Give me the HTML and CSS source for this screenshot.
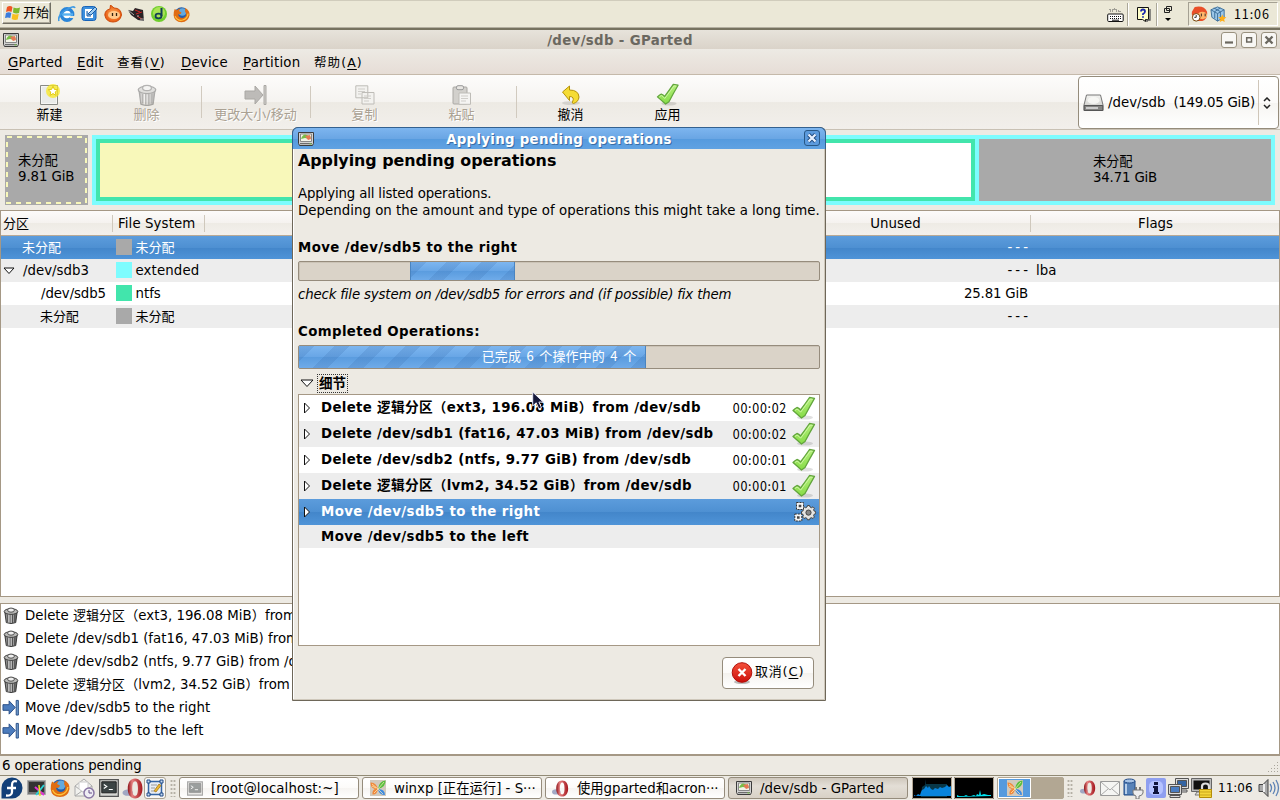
FILE: index.html
```html
<!DOCTYPE html>
<html lang="zh-CN">
<head>
<meta charset="utf-8">
<title>/dev/sdb - GParted</title>
<link rel="stylesheet" href="styles.css">
</head>
<body>
<svg class="defs" width="0" height="0">
  <defs>
    <linearGradient id="gGreen" x1="0" y1="0" x2="0" y2="1"><stop offset="0" stop-color="#b4ef7c"/><stop offset="1" stop-color="#86dc46"/></linearGradient>
    <linearGradient id="gRed" x1="0" y1="0" x2="0" y2="1"><stop offset="0" stop-color="#f4503a"/><stop offset="1" stop-color="#cc0f0a"/></linearGradient>
    <linearGradient id="gMetal" x1="0" y1="0" x2="1" y2="0"><stop offset="0" stop-color="#555"/><stop offset=".35" stop-color="#eee"/><stop offset="1" stop-color="#555"/></linearGradient>
    <linearGradient id="gDisk" x1="0" y1="0" x2="0" y2="1"><stop offset="0" stop-color="#f4f4f2"/><stop offset="1" stop-color="#c4c4c0"/></linearGradient>
    <radialGradient id="gOrange"><stop offset="0" stop-color="#ffb060"/><stop offset="1" stop-color="#e85a10"/></radialGradient>
    <linearGradient id="gOpera" x1="0" y1="0" x2="1" y2="0"><stop offset="0" stop-color="#8d1218"/><stop offset=".3" stop-color="#e58080"/><stop offset="1" stop-color="#a3151c"/></linearGradient>
    <symbol id="check" viewBox="0 0 24 24"><ellipse cx="13" cy="21.500" rx="8" ry="2" fill="#000" opacity=".12"/><path d="M1 14.500Q3 12.500 5 11.500q2 .5 3.500 2.500Q13 8 17.500 1.500l5 .8Q18 10 13 19.500L9.500 22Q5 18 1 14.500z" fill="url(#gGreen)" stroke="#62a53c" stroke-width="1.300" stroke-linejoin="round"/><path d="M3 14.500 5 13q2 1 3.600 3.200Q14 9 18.300 3l2.200.3" fill="none" stroke="#d3f7ab" stroke-width=".9"/></symbol>
    <symbol id="trash" viewBox="0 0 16 18"><path d="M1.500 5.500h13l-1.500 11Q8 18.600 3 16.500z" fill="url(#gMetal)" stroke="#333"/><path d="M4.500 8v8M7 8v9M9.500 8v9M12 8v8" stroke="#444" stroke-width="1"/><ellipse cx="8" cy="4.800" rx="7.200" ry="3" fill="#b9b9b7" stroke="#333"/><ellipse cx="8" cy="3.300" rx="3.600" ry="2.200" fill="#eee" stroke="#444"/></symbol>
    <symbol id="move" viewBox="0 0 18 18"><path d="M.5 6h6.500V2l6.500 7L7 16v-4H.5z" fill="#4c7cbd" stroke="#264c86"/><path d="M14.500 1.500h2.300v15.500h-2.300z" fill="#729fcf" stroke="#264c86"/></symbol>
    <symbol id="monitor" viewBox="0 0 16 14"><path d="M.5.5h15v10.800l-1 2.200h-13l-1-2.200z" fill="#d4d4d4" stroke="#3c3c3c"/><path d="M2.500 2h11v7.500h-11z" fill="#f4f4e8" stroke="#888"/><path d="M3 7q2-6 6-4l4 2-2 2-4-1z" fill="#76bd47"/><path d="m7 4 5-1 1 4-3 1z" fill="#e67855"/><path d="M2 11.700h12" stroke="#555"/><path d="M11.500 12h2" stroke="#7bd446"/></symbol>
    <symbol id="term" viewBox="0 0 20 18"><path d="M.7.7h18.600v16.600H.7z" fill="#d6d6d2" stroke="#555" stroke-width="1.300"/><path d="M2.800 2.800h14.400v11H2.800z" fill="#3c4444" stroke="#222"/><path d="m4.800 5.500 3 2-3 2m5 1h4" fill="none" stroke="#fff" stroke-width="1.100"/></symbol>
    <symbol id="opera" viewBox="0 0 20 20"><ellipse cx="5" cy="14" rx="5" ry="3" fill="#8d96ba" opacity=".8"/><path fill-rule="evenodd" d="M12 .5c4.500 0 7 4 7 9.500s-2.500 9.500-7 9.500-7-4-7-9.500 2.500-9.500 7-9.500zm0 2.500c-2 0-2.700 3-2.700 7s.700 7 2.700 7 2.700-3 2.700-7-.7-7-2.700-7z" fill="url(#gOpera)"/></symbol>
    <symbol id="firefox" viewBox="0 0 20 20"><circle cx="10" cy="9.500" r="8" fill="#235fae"/><circle cx="11" cy="7" r="4.500" fill="#63a9dd"/><path d="M2 3.500 4.500 5q2-2 4-2L7 6l3 1.500-1 2-3 .500q1 4 5 4 4.500-.5 4.500-5L14 6q1-2 0-4 6 3 5.500 9Q18 19 10 19 1.500 19 .7 11 .5 7 2 3.500z" fill="#e06d12"/><path d="M2.500 12q3 6 9 4.500Q17 15 17.800 9" fill="none" stroke="#ffc23a" stroke-width="1.400"/></symbol>
    <symbol id="butterfly" viewBox="0 0 16 16"><path d="M0 0h16v16H0z" fill="#d2cabd"/><path d="M8 9Q6 2 .5 2.500.5 8 5 9 2 10 2.500 14.500 7 15 8 9z" fill="#f0883a"/><path d="M8 9q1-8 7.500-8.500Q16 7 8 9z" fill="#58bf3e"/><path d="M8 9q7 0 7 6-6 0-7-6z" fill="#3f8be0"/><path d="m2 4 6 5 6-7M4 13l4-4 5 5M2 6l4 2" fill="none" stroke="#fff2bb" stroke-width=".7"/></symbol>
    <symbol id="pages" viewBox="0 0 20 20"><g fill="#f3f2ef" stroke="#bebcb7"><path d="M.8.8h12v12h-12zM7 7.500h12V19H7z"/></g><path d="M3 4h7M3 6.500h7M3 9h3m3 2h7m-7 2.500h7M9 16h5" stroke="#cfcdc9"/></symbol>
    <symbol id="paste" viewBox="0 0 20 20"><rect x="1" y="2" width="14" height="17" rx="1" fill="#d2d0cc" stroke="#aaa8a4"/><rect x="4.500" y=".7" width="7" height="4" rx="1.500" fill="#e8e6e2" stroke="#999"/><path d="M7 8h11.500v11.300H7z" fill="#f5f4f2" stroke="#bebcb7"/><path d="M9 11h7m-7 2.500h7M9 16h5" stroke="#cfcdc9"/></symbol>
  </defs>
</svg>

<div class="xpbar">
  <div class="start"><svg width="16" height="16" viewBox="0 0 16 16"><path d="M2 2q3-2 5.500 0L6.500 7Q4 5.500 1 7z" fill="#ef5424"/><path d="M8.500 2.500Q12 4 15 2.500L14 8q-3 1-6-.5z" fill="#7cb82c"/><path d="M1 8q3-1.500 5.300 0l-1 5Q3 12 0 13z" fill="#3b7ddd"/><path d="M7.500 8.700q3 1.300 6.200.3l-1 5.500q-3 1-6-.5z" fill="#f8c020"/></svg><span>开始</span></div>
  <div class="quick">
    <svg width="18" height="18" viewBox="0 0 18 18"><circle cx="9" cy="9.500" r="5.600" fill="#fff" stroke="#2b86d9" stroke-width="3.600"/><path d="M4 9.500h11" stroke="#56b0f0" stroke-width="2.400"/><path d="M12 11h6v2h-6z" fill="#ebe8d7"/><path d="M1 16Q-1 11 8 5q8-5 9-2" fill="none" stroke="#3f9ae4" stroke-width="1.600"/></svg>
    <svg width="18" height="18" viewBox="0 0 18 18"><rect x="1" y="1.500" width="14" height="14" rx="2.500" fill="#3d90dd" stroke="#1863b8"/><path d="M4 4h8v9H4z" fill="#fff"/><path d="M6 6v5h4M7 9l7-7 2 2-6 6z" fill="#9ccaf0" stroke="#1c5da4"/></svg>
    <svg width="18" height="18" viewBox="0 0 18 18"><path d="M6 4 6.500 0 10 3q7 0 7.500 7Q16 17 9 17T.8 10Q1 5 6 4z" fill="url(#gOrange)" stroke="#cd4c0b"/><ellipse cx="10" cy="10" rx="6" ry="4" fill="#ffc98a"/><path d="M8.500 8v3m4-3v3" stroke="#321" stroke-width="1.300"/></svg>
    <svg width="18" height="18" viewBox="0 0 18 18"><path d="m1 5 5 1 2-3 8 2 1 11-6-1-7-5z" fill="#292225"/><path d="m8 5 5 2m-4 2 6-2m-5 4 5 3" stroke="#c92222" stroke-width="1"/><path d="m1 5 6 5m3 1h2m2 2v3m2-3v3" stroke="#aaa"/></svg>
    <svg width="18" height="18" viewBox="0 0 18 18"><circle cx="9" cy="9" r="8" fill="#70ce2d"/><circle cx="9" cy="8" r="6" fill="#a9e354"/><path d="M11.500 3v8" stroke="#143e55" stroke-width="2"/><ellipse cx="8.500" cy="11" rx="3" ry="2.300" fill="none" stroke="#143e55" stroke-width="1.800"/></svg>
    <svg width="17" height="17"><use href="#firefox"/></svg>
  </div>
  <div class="xptray">
    <svg width="17" height="16" viewBox="0 0 17 16"><path d="M3 2v2h3V2h3v2h4v2" fill="none" stroke="#555" stroke-dasharray="1 1"/><rect x=".7" y="7" width="15.500" height="7.500" rx="1" fill="#fff" stroke="#111"/><path d="M3 9.500h12M3 11.500h12" stroke="#111" stroke-dasharray="1 1"/><path d="M5 13.200h7" stroke="#111"/></svg>
    <i class="xpsep"></i>
    <svg class="help" width="16" height="18" viewBox="0 0 16 18"><path d="M1.500 1.500h11v12h-3v2l-3-2h-5z" fill="#ffffc8" stroke="#111"/><path d="M14 3v11h-3v2" fill="none" stroke="#555" stroke-width="1.300"/><path d="M5 5.500q0-2 2-2t2 2q0 1.500-2 2.500v1m0 1.300v1.400" fill="none" stroke="#1a28ad" stroke-width="1.800"/></svg>
    <i class="xpsep"></i>
    <svg class="opts" width="10" height="18" viewBox="0 0 10 18"><path d="M3.500 1.500h5v4h-5zM1.500 3.500h5v4h-5z" fill="#ebe8d7" stroke="#222"/><path d="M2 13h6l-3 3z"/></svg>
    <div class="xpclock">
      <svg width="17" height="17" viewBox="0 0 18 18"><path d="M1 6 4 1q10-2 13 5 1 8-5 10H4q-4-4-3-10z" fill="#e94f28"/><ellipse cx="12" cy="10" rx="5" ry="4" fill="#ffb469"/><path d="M11 8v3m4-3v3" stroke="#322"/><circle cx="5.500" cy="12" r="4" fill="#fff" stroke="#704000"/><path d="M5.500 9.500V12H3.500" fill="none" stroke="#222"/></svg>
      <svg width="17" height="17" viewBox="0 0 18 18"><path d="m1 4 7-3 7 3v8l-7 4-6-4z" fill="#9bc7e9" stroke="#3c6e9a"/><path d="m1 4 7 4 7-4M8 8v8M4 2l7 4v7M11 2 5 6v7" stroke="#3c6e9a" fill="none"/><path d="m13 9 1.300 2.700 3 .3-2.300 2 .6 3-2.600-1.500L10.400 17l.6-3-2.300-2 3-.3z" fill="#ffae17"/></svg>
      <span>11:06</span>
    </div>
  </div>
</div>

<div class="window">
  <div class="titlebar">
    <svg class="tico" width="16" height="14"><use href="#monitor"/></svg>
    <span class="ttext">/dev/sdb - GParted</span>
    <div class="wbtns">
      <b><svg width="14" height="14"><path d="M3 9.500h8" stroke="#6a675f" stroke-width="2.200"/></svg></b>
      <b><svg width="14" height="14"><path d="M4.700 4.700h4.800v4.300H4.700z" fill="none" stroke="#6a675f" stroke-width="1.500"/></svg></b>
      <b><svg width="14" height="14"><path d="m3.500 3.500 7 7m0-7-7 7" stroke="#6a675f" stroke-width="2.300"/></svg></b>
    </div>
  </div>
  <div class="menubar">
    <span class="m1"><u>G</u>Parted</span><span class="m2"><u>E</u>dit</span><span class="m3">查看(<u>V</u>)</span><span class="m4"><u>D</u>evice</span><span class="m5"><u>P</u>artition</span><span class="m6">帮助(<u>A</u>)</span>
  </div>
  <div class="toolbar">
    <div class="tools">
      <div class="tool"><svg width="22" height="22" viewBox="0 0 22 22"><path d="M1.500 1.500h17v19h-17z" fill="#f6f6f4" stroke="#888a85"/><path d="M3 3h14v16H3z" fill="#e9ebe9"/><circle cx="14" cy="7" r="7" fill="#f8e820" opacity=".75"/><path d="m14 2.200 1.400 3.200 3.500.3-2.700 2.300.9 3.400-3.100-1.800-3 1.800.8-3.400-2.600-2.300 3.400-.3z" fill="#fff" stroke="#e4cc10"/></svg><span>新建</span></div>
      <div class="tool off"><svg class="fade" width="20" height="22"><use href="#trash"/></svg><span>删除</span></div>
      <i></i>
      <div class="tool off"><svg width="24" height="22" viewBox="0 0 24 22"><path d="M1 7h10V2l8 9-8 9v-5H1z" fill="#bdbbb8" stroke="#aaa8a4"/><path d="M20 1.500h2v19h-2z" fill="#d0ceca" stroke="#aaa8a4"/></svg><span>更改大小/移动</span></div>
      <i></i>
      <div class="tool off"><svg width="20" height="20"><use href="#pages"/></svg><span>复制</span></div>
      <div class="tool off"><svg width="20" height="20"><use href="#paste"/></svg><span>粘贴</span></div>
      <i></i>
      <div class="tool"><svg width="22" height="22" viewBox="0 0 22 22"><ellipse cx="11" cy="19" rx="9" ry="2" opacity=".1"/><path d="M2.500 8 9.500 2v4q9 0 9.500 7-.5 5-5.500 6.500-2-.5-1-1.500 2.500-5.500-3-5.500v4z" fill="#f6dc35" stroke="#b69308" stroke-linejoin="round"/></svg><span>撤消</span></div>
      <div class="tool"><svg width="24" height="23"><use href="#check"/></svg><span>应用</span></div>
    </div>
    <div class="combo">
      <svg width="21" height="18" viewBox="0 0 21 18"><path d="M3.500 1h14L20 11v5.500H1V11z" fill="url(#gDisk)" stroke="#777"/><path d="M1.200 11.500h18.600v5H1.200z" fill="#858583" stroke="#555"/><path d="M3 14h12" stroke="#ccc" stroke-width="2"/><ellipse cx="10.500" cy="6.500" rx="6" ry="3.500" fill="#fafaf8" opacity=".8"/></svg>
      <span class="cdev">/dev/sdb</span><span class="csize">(149.05 GiB)</span><i></i>
      <svg class="spin" width="8" height="12" viewBox="0 0 8 12"><path d="m1 4 3-3 3 3M1 8l3 3 3-3" fill="none" stroke="#222" stroke-width="1.500"/></svg>
    </div>
  </div>

  <div class="visual">
    <div class="free"><svg width="83" height="70"><rect x="2" y="2" width="79" height="66" fill="none" stroke="#f8f8ba" stroke-width="2" stroke-dasharray="5 5"/></svg><p>未分配<br>9.81 GiB</p></div>
    <div class="ext"><div class="ntfs"><div class="used"></div></div><div class="un"><p>未分配<br>34.71 GiB</p></div></div>
  </div>

  <div class="tree">
    <div class="thead"><span class="h1">分区</span><span class="h2">File System</span><span class="h3">Unused</span><span class="h4">Flags</span></div>
    <div class="trow sel"><span class="name d1 cj">未分配</span><span class="fs cj"><i class="gray"></i>未分配</span><span class="num dash">---</span><span></span></div>
    <div class="trow alt"><span class="name d1"><svg class="exp" width="12" height="8"><path d="M1 1h10L6 6.500z" fill="#fff" stroke="#111"/></svg>/dev/sdb3</span><span class="fs"><i class="cyan"></i><span class="wide">extended</span></span><span class="num dash">---</span><span class="flag">lba</span></div>
    <div class="trow"><span class="name d2">/dev/sdb5</span><span class="fs"><i class="green"></i>ntfs</span><span class="num gib">25.81 GiB</span><span></span></div>
    <div class="trow alt"><span class="name d2 cj">未分配</span><span class="fs cj"><i class="gray"></i>未分配</span><span class="num dash">---</span><span></span></div>
  </div>

  <div class="pending">
    <p><svg width="16" height="17"><use href="#trash"/></svg><span>Delete <em>逻辑分区</em>（ext3, 196.08 MiB）from /dev/sdb</span></p>
    <p><svg width="16" height="17"><use href="#trash"/></svg><span>Delete /dev/sdb1 (fat16, 47.03 MiB) from /dev/sdb</span></p>
    <p><svg width="16" height="17"><use href="#trash"/></svg><span>Delete /dev/sdb2 (ntfs, 9.77 GiB) from /dev/sdb</span></p>
    <p><svg width="16" height="17"><use href="#trash"/></svg><span>Delete <em>逻辑分区</em>（lvm2, 34.52 GiB）from /dev/sdb</span></p>
    <p><svg width="18" height="17"><use href="#move"/></svg><span>Move /dev/sdb5 to the right</span></p>
    <p><svg width="18" height="17"><use href="#move"/></svg><span class="wide">Move /dev/sdb5 to the left</span></p>
  </div>
  <div class="status"><span>6 operations pending</span><svg width="12" height="12"><g fill="#aaa69b"><path d="M9 1h1v1H9zM6 4h1v1H6zM9 4h1v1H9zM3 7h1v1H3zM6 7h1v1H6zM9 7h1v1H9zM0 10h1v1H0zM3 10h1v1H3zM6 10h1v1H6zM9 10h1v1H9z"/></g></svg></div>
</div>

<div class="panel">
  <div class="launch">
    <svg width="22" height="22" viewBox="0 0 22 22"><path d="M11 .5A10.500 10.500 0 1 1 11 21.500H.5V11A10.500 10.500 0 0 1 11 .5z" fill="#123f78"/><path d="M16 4.500q-5-1.500-5 3.500v7q0 4-6 3.500M6 11h9" fill="none" stroke="#fff" stroke-width="2.300"/></svg>
    <svg width="20" height="18" viewBox="0 0 20 18"><path d="M.5 1.500h18v14H.5z" fill="#777" stroke="#aaa"/><path d="M2 3h15v10H2z" fill="#333"/><path d="m8 8 9 8" stroke="#e432d5" stroke-width="2"/><path d="m17 6-8 10" stroke="#29d2d8" stroke-width="2"/><path d="m12 6 1 11" stroke="#eedc24" stroke-width="1.500"/></svg>
    <svg width="20" height="20"><use href="#firefox"/></svg>
    <svg width="21" height="21" viewBox="0 0 21 21"><path d="m1 8 9-7 8 7v10H1z" fill="#f1f1ee" stroke="#aaa"/><path d="m1 8 8 6 9-6M1 18l7-5" fill="none" stroke="#aaa"/><path d="M5 4h9v6l-5 4-4-3z" fill="#fff" stroke="#ccc"/><circle cx="15" cy="15" r="5" fill="#efedf4" stroke="#8a77a5" stroke-width="1.500"/><path d="M15 12v3h3" fill="none" stroke="#654c88"/></svg>
    <svg width="20" height="18"><use href="#term"/></svg>
    <svg width="22" height="21"><use href="#opera"/></svg>
    <b><svg width="18" height="18" viewBox="0 0 18 18"><path d="M2.500 2.500h13v13h-13z" fill="#e8edf4" stroke="#3465a4" stroke-width="1.500"/><path d="M1 1h3v3H1zM14 1h3v3h-3zM1 14h3v3H1zM14 14h3v3h-3z" fill="#c7dbf0" stroke="#204a87"/><path d="M5 6h6M5 9h4m-4 3h3" stroke="#999"/><path d="m8 12 5-7 2 1.500L10 13z" fill="#edb72e" stroke="#9a6c10" stroke-width=".7"/></svg></b>
  </div>
  <i class="grip"></i>
  <div class="tasks">
    <div class="task t1"><svg class="fade2" width="16" height="15"><use href="#term"/></svg><span>[root@localhost:~]</span></div>
    <div class="task t2"><svg width="16" height="16"><use href="#butterfly"/></svg><span>winxp [正在运行] - S···</span></div>
    <div class="task t3"><svg width="17" height="17"><use href="#opera"/></svg><span>使用gparted和acron···</span></div>
    <div class="task t4 on"><svg width="16" height="14"><use href="#monitor"/></svg><span>/dev/sdb - GParted</span></div>
  </div>
  <svg class="mon" width="40" height="22"><path d="M.5.500h39v21H.5z" stroke="#b3a694"/><path d="M9 19l1-9 3-2 1-6v5h21v13H9z" fill="#083748"/><path d="M2 20v-2l2 1 2-2 2 1 1-3 1-2 2-1 2-3 2 2 1-2 2 3 2 1 2-2 3 1 2-2 2 1 3-1 2-2 2 2 2-1v10H2z" fill="#0884dc"/></svg>
  <svg class="mon" width="40" height="22"><path d="M.5.500h39v21H.5z" stroke="#b3a694"/><path d="M3 20v-2l2 1h5l2-1 2 1h3l3-1 2 1 1-2 2 1 1-5 1 5 3-1 4 1h3v1z" fill="#00e6f5"/></svg>
  <div class="pager"><div><svg width="16" height="16"><use href="#butterfly"/></svg></div></div>
  <i class="grip g2"></i>
  <div class="tray">
    <svg class="a1" width="16" height="16"><use href="#opera"/></svg>
    <svg class="a2" width="20" height="15" viewBox="0 0 20 15"><path d="M.5.500h19v14H.5z" fill="#f5f5f3" stroke="#999"/><path d="m1 1 9 8 9-8M1 14l7-6m11 6-7-6" fill="none" stroke="#aaa"/></svg>
    <svg class="a3" width="22" height="21" viewBox="0 0 22 21"><path d="M2 3h11v14H2z" fill="#5782b8" stroke="#204a87"/><ellipse cx="7.500" cy="3" rx="5.500" ry="2" fill="#a7c3e5" stroke="#204a87"/><path d="M4 6v10" stroke="#b8cfe9" stroke-width="2"/><path d="M14 9v3m4-3v3" stroke="#777" stroke-width="2"/><path d="M11 12h10v3q-1 3-4 3v3h-3v-3q-3-1-3-3z" fill="#eee" stroke="#777"/></svg>
    <svg class="a4" width="20" height="20" viewBox="0 0 20 20"><rect width="20" height="20" rx="2" fill="#8f9ff0"/><rect x="3" y="3" width="14" height="14" rx="5" fill="#b5c2ff"/><path d="M8 4h4v3H8zM7 8h5v6h1v2H7v-2h1v-4H7z" fill="#10143c"/></svg>
    <svg class="a5" width="21" height="20" viewBox="0 0 21 20"><g stroke="#555"><path d="M7.500.500h13v10h-13z" fill="#ddd"/><path d="M9.500 2.500h9v6h-9z" fill="#3465a4"/><path d="M12 12h7v2h-7z" fill="#ddd"/><path d="M.5 6.500h13v10H.5z" fill="#ddd"/><path d="M2.500 8.500h9v6h-9z" fill="#4a7dc2"/><path d="M2 17.500h10v2H2z" fill="#ddd"/></g></svg>
    <svg class="a6" width="22" height="22" viewBox="0 0 22 22"><path d="M.5 1.500h20v13H.5z" fill="#bbb" stroke="#666"/><path d="M2.500 3.500h16v9h-16z" fill="#111"/><path d="M6 15h6v3H4z" fill="#ddd" stroke="#777"/><path d="M11 13V9.500q0-3 3.500-3t3.500 3V13" fill="none" stroke="#ddd" stroke-width="2.200"/><path d="M8.500 12.500h12v8h-12z" fill="#f4d63a" stroke="#b48d08"/><path d="M9 15h11m-11 3h11" stroke="#c9a51b"/></svg>
    <span>11:06</span>
    <svg class="a7" width="22" height="20" viewBox="0 0 22 20"><path d="M1 6.500h4l5-5v17l-5-5H1z" fill="#aaa" stroke="#444"/><path d="M6 6v8" stroke="#eee" stroke-width="2"/><path d="M12 6q3 4 0 8M15 4q4 6 0 12M18 2q5 8 0 16" fill="none" stroke="#5d82b5" stroke-width="1.300"/></svg>
  </div>
</div>

<div class="dialog">
  <div class="dtitle">
    <svg width="16" height="14"><use href="#monitor"/></svg><span>Applying pending operations</span>
    <b><svg width="14" height="14"><path d="m3.500 3.500 7 7m0-7-7 7" stroke="#204a80" stroke-width="4"/><path d="m3.500 3.500 7 7m0-7-7 7" stroke="#e8f2ff" stroke-width="2.200"/></svg></b>
  </div>
  <div class="dbody">
    <h1>Applying pending operations</h1>
    <p class="desc"><span>Applying all listed operations.</span><br>Depending on the amount and type of operations this might take a long time.</p>
    <h2 class="cur">Move /dev/sdb5 to the right</h2>
    <div class="bar pulse"><div class="fill"></div></div>
    <p class="ital">check file system on /dev/sdb5 for errors and (if possible) fix them</p>
    <h2 class="comp">Completed Operations:</h2>
    <div class="bar total"><div class="fill"></div><span>已完成 6 个操作中的 4 个</span></div>
    <div class="details"><svg width="14" height="9"><path d="M1 1h12L7 7.500z" fill="#fff" stroke="#111"/></svg><span>细节</span></div>
    <div class="ops">
      <div class="op"><svg class="tri" width="8" height="12"><use href="#tri"/></svg><span>Delete <em>逻辑分区</em>（ext3, 196.08 MiB）from /dev/sdb</span><time>00:00:02</time><svg width="24" height="24"><use href="#check"/></svg></div>
      <div class="op alt"><svg class="tri" width="8" height="12"><use href="#tri"/></svg><span>Delete /dev/sdb1 (fat16, 47.03 MiB) from /dev/sdb</span><time>00:00:02</time><svg width="24" height="24"><use href="#check"/></svg></div>
      <div class="op"><svg class="tri" width="8" height="12"><use href="#tri"/></svg><span>Delete /dev/sdb2 (ntfs, 9.77 GiB) from /dev/sdb</span><time>00:00:01</time><svg width="24" height="24"><use href="#check"/></svg></div>
      <div class="op alt"><svg class="tri" width="8" height="12"><use href="#tri"/></svg><span>Delete <em>逻辑分区</em>（lvm2, 34.52 GiB）from /dev/sdb</span><time>00:00:01</time><svg width="24" height="24"><use href="#check"/></svg></div>
      <div class="op sel"><svg class="tri" width="8" height="12"><path id="tri" d="M1.500 1v10L6.500 6z" fill="#fff" stroke="#111"/></svg><span>Move /dev/sdb5 to the right</span><svg width="22" height="22" viewBox="0 0 22 22"><path d="m13 6 .5-1.500h2L16 6l1.500.7 1.500-.9 1.400 1.400-.8 1.600.6 1.300 1.500.4v2.200l-1.500.5-.6 1.300.8 1.500-1.400 1.500-1.500-.8-1.500.6-.5 1.500h-2l-.6-1.500-1.400-.6-1.500.8-1.400-1.500.8-1.500-.6-1.300-1.300-.5v-2.200l1.300-.4.6-1.300-.8-1.600L10 5.800l1.500.9z" fill="#e4e4e2" stroke="#444"/><circle cx="14.500" cy="11.600" r="2.600" fill="#888" stroke="#444"/><g fill="#f4f4f4" stroke="#333"><path d="M2.500 1.500h7v7h-7zM.8 13h7v7h-7z" stroke-dasharray="2 1"/></g><path d="M4.700 3.700h2.600v2.600H4.700zM3 15.200h2.600v2.600H3z" fill="#444"/></svg></div>
      <div class="op alt last"><span>Move /dev/sdb5 to the left</span></div>
    </div>
    <div class="cancel"><svg width="22" height="22" viewBox="0 0 22 22"><ellipse cx="11" cy="20" rx="8" ry="2" opacity=".25"/><circle cx="11" cy="10.500" r="9.800" fill="url(#gRed)" stroke="#b00d08"/><path d="m7.500 7 7 7m0-7-7 7" stroke="#fff" stroke-width="2.400"/></svg><span>取消(<u>C</u>)</span></div>
  </div>
</div>
<svg class="cursor" width="12" height="20" viewBox="0 0 12 20"><path d="M.7 1v14l3.500-3.200 2.600 6 2.700-1.200-2.600-5.500h4.400z" fill="#15183a" stroke="#e8e8f4"/></svg>
</body>
</html>
```
FILE: styles.css
```css
* { box-sizing: border-box; }
body {
  margin: 0; width: 1280px; height: 800px; overflow: hidden; position: relative;
  display: flex; flex-direction: column; background: #edeae3; color: #000;
  font: 13.333px/17px "DejaVu Sans", "Noto Sans CJK SC", sans-serif; white-space: nowrap;
}
.defs { position: absolute; }
svg { display: block; flex: none; }
p, h1, h2 { margin: 0; font-size: inherit; }
em { font-style: normal; font-size: 13px; }
u { text-underline-offset: 2px; }
.cj { font-size: 13px; }
.wide { letter-spacing: .12px; }

/* host taskbar */
.xpbar { height: 30px; flex: none; display: flex; align-items: center; background: #ebe8d7; border-top: 1px solid #d0ccbc; border-bottom: 2px solid #76725f; box-shadow: inset 0 -1px #b3afa0; padding-left: 2px; }
.start { width: 49px; height: 22px; margin-top: -3px; display: flex; align-items: center; gap: 2px; padding-left: 2px; font: 13px/20px "Noto Sans CJK SC", sans-serif; border: 1px solid; border-color: #fff #716f64 #716f64 #fff; box-shadow: inset -1px -1px #aca899; }
.start span { margin-top: -2px; }
.quick { display: flex; gap: 5px; margin-left: 7px; align-items: center; }
.quick svg { margin-top: -1px; }
.xptray { margin-left: auto; display: flex; align-items: center; height: 27px; }
.xpsep { width: 2px; height: 23px; background: #aaa798; border-right: 1px solid #fff; margin: 0 7px 0 3px; }
.help { margin-right: 4px; }
.xptray .help + .xpsep { margin: 0 5px 0 0; }
.opts { margin-right: 15px; margin-top: -2px; }
.xpclock { width: 90px; height: 24px; margin-right: 2px; margin-top: -1px; display: flex; align-items: center; gap: 2px; padding-left: 2px; border: 1px solid; border-color: #a5a193 #fff #fff #a5a193; font: 12.5px/20px "Noto Sans CJK SC", sans-serif; letter-spacing: .9px; }
.xpclock span { margin-left: 5px; }

.window { height: 746px; flex: none; display: flex; flex-direction: column; }
.titlebar { height: 19px; flex: none; display: grid; grid-template-columns: 20px 1fr 60px; align-items: center; background: linear-gradient(#e7e3db, #dad3c9); }
.tico { margin-left: 3px; }
.ttext { text-align: center; font-weight: bold; color: #6b6860; letter-spacing: .33px; margin: 1px 0 0 0; }
.wbtns { display: flex; gap: 4px; justify-content: flex-end; padding-right: 3px; }
.wbtns b { width: 16px; height: 16px; border: 1px solid #99917f; border-radius: 3px; background: #f8f7f4; }
.menubar { height: 26px; flex: none; display: flex; padding-left: 8px; line-height: 27px; letter-spacing: .2px; background: linear-gradient(#edeae4, #e6ddd6); border-bottom: 1px solid #c5b9aa; }
.m1 { width: 69px; } .m2 { width: 40px; } .m3 { width: 64px; } .m4 { width: 62px; } .m5 { width: 71px; }
.m3, .m6 { font-size: 12.500px; letter-spacing: 1.100px; }

.toolbar { height: 55px; flex: none; display: flex; justify-content: space-between; background: linear-gradient(#fdfcfb 0, #f5f3f0 50%, #edeae4 51%, #f2efeb 100%); border-bottom: 1px solid #c9c1b4; }
.tools { display: flex; align-items: center; padding-left: 1px; }
.tools > i { width: 1px; height: 32px; background: #d1cabf; margin: 0 5px 0 6px; }
.tool { min-width: 97px; height: 55px; padding-top: 9px; display: grid; grid-template-rows: 22px 17px; justify-items: center; align-items: center; font-size: 13px; }
.off { color: #aaa193; text-shadow: 1px 1px #fff; }
.fade { opacity: .38; }
.fade2 { opacity: .5; }
.combo { width: 201px; height: 53px; margin: 1px 1px 0 0; display: flex; align-items: center; padding: 0 3px 0 4px; border: 1px solid #958c7c; border-radius: 4px; background: linear-gradient(#fff 0, #fcfbfa 50%, #f6f5f2 51%, #fff 100%); }
.combo .cdev { margin: 0 8px 0 4px; }
.csize { letter-spacing: -.25px; }
.combo > i { width: 1px; height: 45px; background: #cfc6b9; margin: 0 4px 0 3px; }

.visual { height: 80px; flex: none; display: flex; gap: 4px; padding: 5px 5px 5px; }
.free { width: 83px; height: 70px; background: #a9a9a9; position: relative; line-height: 16px; }
.free svg { position: absolute; inset: 0; }
.free p { padding: 18px 0 0 13px; letter-spacing: -.1px; }
.ext { flex: 1; height: 70px; background: #7dfcfe; padding: 4px; display: flex; gap: 4px; }
.ntfs { width: 879px; background: #42e5ac; padding: 4px; }
.used { width: 420px; height: 54px; background: #f8f8ba; box-shadow: 451px 0 #fff; }
.un { flex: 1; background: #a9a9a9; display: flex; justify-content: center; align-items: center; line-height: 16px; letter-spacing: -.15px; }

.tree { height: 387px; flex: none; background: #fff; border: 1px solid #a59885; }
.thead { height: 25px; display: flex; align-items: center; background: linear-gradient(#fcfbfa 0, #f5f2ef 50%, #eeebe5 51%, #f3f0ec 100%); border-bottom: 1px solid #b9a995; line-height: 17px; }
.thead span { border-right: 1px solid #cfc8bc; }
.h1 { width: 112px; padding-left: 2px; font-size: 13px; }
.h2 { width: 92px; padding-left: 5px; letter-spacing: .1px; }
.h3 { width: 826px; padding-left: 556px; text-align: center; }
.thead .h4 { flex: 1; text-align: center; border: 0; padding-left: 1px; }
.trow { height: 23px; display: grid; grid-template-columns: 115px 88px 824px 1fr; line-height: 23px; }
.alt { background: #ededed; }
.sel { background: linear-gradient(#5c9cdc 0, #4e90d2 50%, #4386ca 51%, #4f94d8 100%); color: #fff; }
.name { position: relative; }
.exp { position: absolute; left: 2px; top: 8px; }
.d1 { padding-left: 22px; } .d2 { padding-left: 40px; letter-spacing: -.1px; }
.cj.d1 { padding-left: 21px; } .cj.d2 { padding-left: 39px; }
.fs { display: flex; align-items: center; gap: 3.500px; }
.fs i { width: 16px; height: 16px; margin-top: -1px; }
.gray { background: #a9a9a9; } .cyan { background: #7dfcfe; } .green { background: #42e5ac; }
.num { text-align: right; }
.gib { letter-spacing: -.17px; }
.dash { letter-spacing: 3px; margin-right: -3px; }
.flag { padding-left: 8px; }

.pending { height: 153px; flex: none; margin-top: 6px; background: #fff; border: 1px solid #a59885; border-bottom-width: 2px; }
.pending p { height: 23px; display: flex; align-items: center; padding-left: 1px; }
.pending p svg { margin-right: 5px; }
.pending p:nth-child(-n+4) svg { margin-left: 1px; margin-right: 6px; }
.status { flex: 1; padding: 1px 0 0 2px; display: flex; justify-content: space-between; line-height: 17px; letter-spacing: -.13px; border-bottom: 1px solid #918a75; }
.status svg { margin-top: 4px; }

/* desktop panel */
.panel { height: 24px; flex: none; display: flex; align-items: center; background: #edeae3; }
.launch { display: flex; align-items: center; gap: 3.700px; width: 170px; padding-left: 1px; }
.launch b { width: 22px; height: 22px; border: 1px solid #aaa292; border-radius: 3px; background: #f8f7f5; display: grid; place-items: center; margin-left: -4px; }
.grip { width: 6px; height: 18px; background: radial-gradient(circle, #b5b0a5 0 1px, transparent 1.200px) 0 0 / 3px 4px; }
.tasks { display: flex; gap: 3px; margin-left: 3px; }
.task { width: 180px; height: 22px; border: 1px solid #958c7c; border-radius: 3px; background: linear-gradient(#fff 0, #fcfbf9 50%, #f6f4f1 51%, #fff); display: flex; align-items: center; padding-left: 7px; gap: 8px; }
.t1 { letter-spacing: .1px; }
.t3 { padding-left: 6px; letter-spacing: -.05px; }
.on { background: linear-gradient(#cfc8bd, #e3ded6 40%, #d8d1c6); }
.mon { margin-left: 2px; background: #000; }
.tasks + .mon { margin-left: 4px; }
.pager { margin: 0 3px; width: 67px; height: 22px; background: #b2a793; border-radius: 2px; border: 1px solid #b2a793; }
.pager div { width: 33px; height: 20px; background: #559ade; border: 1px solid #fff; display: grid; place-items: center; }
.tray { display: flex; align-items: center; margin-left: 7px; flex: 1; }
.a2 { margin-left: 4px; } .a3, .a4, .a5, .a6 { margin-left: 2px; }
.tray span { font-size: 12px; margin-left: 5px; width: 36px; }
.a7 { margin-left: 4px; }

/* progress dialog */
.dialog { position: absolute; left: 292px; top: 127px; width: 534px; height: 574px; background: #edeae3; border: 1px solid #6e6759; border-radius: 6px 6px 0 0; box-shadow: inset -1px -1px #cfc8bb, inset 1px 0 #fff; }
.dtitle { height: 22px; margin: -1px -1px 0; border: 1px solid #34618f; border-bottom: 0; border-radius: 6px 6px 0 0; background: linear-gradient(#7db5ef 0, #6aa6e4 50%, #559ade 51%, #60a2e2 100%); display: flex; align-items: center; justify-content: space-between; padding: 0 5px; color: #fff; font-weight: bold; text-shadow: 1px 1px #3a6da5; letter-spacing: .3px; }
.dtitle span { margin-top: 2px; }
.dtitle b { width: 16px; height: 16px; border: 1px solid #295886; border-radius: 3px; background: #5b9add; margin-top: -1px; }
.dbody { padding: 0 5px; display: flex; flex-direction: column; }
.dbody h1 { font-size: 15.900px; line-height: 20px; margin-top: 2px; letter-spacing: -.04px; }
.desc { margin-top: 14px; line-height: 17px; letter-spacing: .03px; }
.desc span { letter-spacing: -.15px; }
.dbody h2 { line-height: 17px; letter-spacing: .38px; }
.cur { margin-top: 20px; }
.bar { border: 1px solid #968c7d; border-radius: 2px; background: #dad3c8; width: 522px; box-shadow: inset 1px 1px #cbc3b6; position: relative; }
.fill { height: 100%; background: repeating-linear-gradient(135deg, rgba(50,100,165,.18) 0 11px, transparent 11px 25px), linear-gradient(#7db6f0, #68a6e6 50%, #5a9cdf 51%, #6fabe9); border: 1px solid #4a84c0; border-width: 0 1px; }
.pulse { height: 20px; margin-top: 5px; }
.pulse .fill { width: 105px; margin-left: 111px; }
.ital { font-style: italic; margin-top: 5px; letter-spacing: -.16px; }
.dbody .comp { margin-top: 20px; }
.total { height: 24px; margin-top: 5px; }
.total .fill { width: 347px; border-left: 0; }
.total span { position: absolute; inset: 0; text-align: center; line-height: 20px; color: #fff; font-family: "Noto Sans CJK SC", sans-serif; font-size: 13px; letter-spacing: .1px; word-spacing: 2.500px; }
.details { height: 25px; display: flex; align-items: center; gap: 3px; padding: 4px 0 0 2px; }
.details span { border: 1px dotted #333; line-height: 16px; height: 19px; padding: 0 1px; font-weight: bold; font-size: 13.500px; }
.ops { height: 252px; width: 522px; background: #fff; border: 1px solid #a59885; }
.op { height: 26px; display: flex; align-items: center; font-weight: bold; padding-right: 3px; }
.op .tri { margin: 0 10px 0 4px; }
.op span { flex: 1; letter-spacing: .32px; margin-top: -2px; }
.op em { font-size: 13.700px; }
.op.sel span, .op.last span { letter-spacing: .38px; }
.op time { font: 12.500px/20px "Noto Sans CJK SC", sans-serif; letter-spacing: .7px; margin: -1px 5px 0 0; }
.last { height: 23px; padding-left: 22px; }
.op.last span { margin-top: 0; }
.cancel { align-self: flex-end; margin: 11px 6px 0 0; width: 92px; height: 32px; border: 1px solid #958c7c; border-radius: 4px; background: linear-gradient(#fff 0, #fcfbf9 50%, #f4f2ee 51%, #fff); display: flex; align-items: center; gap: 2px; padding-left: 8px; font-size: 13px; letter-spacing: .8px; }
.cancel span { margin-top: -3px; }
.cursor { position: absolute; left: 532px; top: 391px; }
```
